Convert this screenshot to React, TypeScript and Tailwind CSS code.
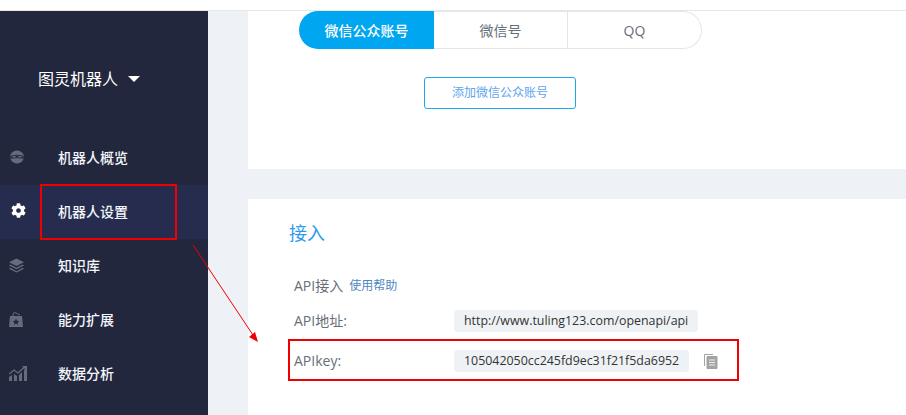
import { FaCog } from "react-icons/fa";
import type { ReactNode } from "react";

const FONT = "font-['Open_Sans','Noto_Sans_CJK_SC',sans-serif]";

function NavRow({ icon, label, active }: { icon: ReactNode; label: string; active?: boolean }) {
  return (
    <div className={`flex h-[54px] shrink-0 items-center ${active ? "bg-[#262c4e]" : ""}`}>
      <div className="flex w-[58px] shrink-0 justify-start pl-[9px]">{icon}</div>
      <span className="pb-[2px] text-[14px] font-medium text-[#f2f5fa]">{label}</span>
    </div>
  );
}

function Row({ label, children }: { label: string; children: ReactNode }) {
  return (
    <div className="flex h-[22px] items-center">
      <span className="w-[160px] shrink-0 pb-[2px] text-[14px] text-[#666e78]">{label}</span>
      {children}
    </div>
  );
}

export default function App() {
  return (
    <div className={`relative flex h-[415px] w-[906px] flex-col overflow-hidden bg-white ${FONT}`}>
      <div className="h-[11px] shrink-0 border-b border-[#e8e8e8] bg-white" />
      <div className="flex min-h-0 flex-1">
        {/* sidebar */}
        <aside className="flex w-[208px] shrink-0 flex-col bg-[#22273e]">
          <div className="flex h-[120px] shrink-0 items-center pl-[38px] pt-[15px]">
            <span className="text-[16px] text-white">图灵机器人</span>
            <span className="ml-[10px] h-0 w-0 border-x-[6px] border-t-[6px] border-x-transparent border-t-white" />
          </div>
          <NavRow
            label="机器人概览"
            icon={
              <svg className="-mt-[3px]" width="16" height="14" viewBox="0 0 16 14">
                <ellipse cx="8" cy="7" rx="7" ry="6.5" fill="#666c7e" />
                <path d="M0.5 6 Q8 3.5 15.5 6 L14.5 9 Q8 7.5 1.5 9 Z" fill="#2f3448" />
                <path d="M3.5 6.8 H6.5 M9.5 6.8 H12.5" stroke="#6f8590" />
              </svg>
            }
          />
          <NavRow
            active
            label="机器人设置"
            icon={<FaCog size={15} className="-mt-[3px] ml-[2px] text-white" />}
          />
          <NavRow
            label="知识库"
            icon={
              <svg className="-mt-[2px]" width="15" height="15" viewBox="0 0 16 15" fill="#666c7e">
                <path d="M8 0 L16 4 L8 8 L0 4 Z" />
                <path d="M1.5 6.5 L8 10 L14.5 6.5 L16 7.5 L8 11.5 L0 7.5 Z" />
                <path d="M1.5 10 L8 13.5 L14.5 10 L16 11 L8 15 L0 11 Z" />
              </svg>
            }
          />
          <NavRow
            label="能力扩展"
            icon={
              <svg className="-mt-[2px]" width="14" height="15" viewBox="0 0 14 15">
                <path d="M4 4 V2.5 Q4 0.5 6 0.5 L11 3" fill="none" stroke="#666c7e" />
                <path d="M1 4 H13 L14 15 H0 Z" fill="#666c7e" />
                <path d="M7 6.5 L8 8.8 L10.4 9 L8.6 10.5 L9.2 12.8 L7 11.6 L4.8 12.8 L5.4 10.5 L3.6 9 L6 8.8 Z" fill="#22273e" />
              </svg>
            }
          />
          <NavRow
            label="数据分析"
            icon={
              <svg className="-mt-[2px]" width="18" height="15" viewBox="0 0 18 15" fill="#666c7e">
                <path d="M0 11 L3 9 V15 H0 Z" />
                <path d="M5 8 L8 10 V15 H5 Z" />
                <path d="M10 9 L13 6 V15 H10 Z" />
                <path d="M15 4 L18 2 V15 H15 Z" />
                <path d="M0 8 L5 4 L9 7 L15 1.5" fill="none" stroke="#666c7e" strokeWidth="1.3" />
                <path d="M13 0 H18 V5 Z" />
              </svg>
            }
          />
        </aside>

        {/* content */}
        <main className="flex min-w-0 flex-1 flex-col bg-[#eef1f5] pl-[40px]">
          <section className="h-[158px] shrink-0 bg-white pl-[51px]">
            <div className="flex h-[38px] w-[403px] text-[14px]">
              <div className="flex w-[135px] shrink-0 items-center justify-center rounded-l-full bg-[#00a6f0] font-medium text-white">
                微信公众账号
              </div>
              <div className="flex w-[134px] shrink-0 items-center justify-center border-y border-r border-[#e3e5e8] text-[#666e78]">
                微信号
              </div>
              <div className="flex flex-1 items-center justify-center rounded-r-full border-y border-r border-[#e3e5e8] text-[#666e78]">
                QQ
              </div>
            </div>
            <div className="ml-[125px] mt-[28px] flex h-[32px] w-[152px] items-center justify-center rounded-[3px] border border-[#1fa8ee] text-[12px] text-[#5ea4ee]">
              添加微信公众账号
            </div>
          </section>
          <section className="mt-[30px] flex-1 bg-white pl-[41px] pt-[22px]">
            <h2 className="text-[18px] leading-[24px] text-[#2f9bec]">接入</h2>
            <div className="ml-[5px] mt-[29px] flex flex-col">
              <div className="flex h-[22px] items-center">
                <span className="text-[14px] text-[#666e78]">API接入</span>
                <span className="ml-[6px] pt-[1px] text-[12px] text-[#4f87c4]">使用帮助</span>
              </div>
              <div className="mt-[14px]">
                <Row label="API地址:">
                  <span className="flex h-[22px] items-center rounded-[3px] bg-[#eff2f5] px-[10px] text-[12.4px] text-[#333]">
                    http://www.tuling123.com/openapi/api
                  </span>
                </Row>
              </div>
              <div className="mt-[18px]">
                <Row label="APIkey:">
                  <span className="flex h-[22px] items-center rounded-[3px] bg-[#eff2f5] px-[10px] text-[12.4px] text-[#333]">
                    105042050cc245fd9ec31f21f5da6952
                  </span>
                  <svg className="ml-[15px]" width="14" height="15" viewBox="0 0 14 15">
                    <path d="M0.5 12 V0.5 H9" fill="none" stroke="#a3a3a3" />
                    <rect x="2.5" y="2" width="11" height="13" rx="1" fill="#a3a3a3" />
                    <path d="M5 6 H11 M5 8.5 H11 M5 11 H11" stroke="#eeeeee" />
                  </svg>
                </Row>
              </div>
            </div>
          </section>
        </main>
      </div>

      {/* annotations drawn over the screenshot */}
      <div className="absolute left-[40px] top-[184px] h-[56px] w-[137px] border-2 border-[#f00000]" />
      <div className="absolute left-[288px] top-[339px] h-[42px] w-[451px] border-2 border-[#f00000]" />
      <svg className="absolute left-[190px] top-[240px]" width="80" height="105" viewBox="0 0 80 105">
        <path d="M3 5 L65 98" stroke="#f00000" strokeWidth="1" fill="none" />
        <path d="M68 102 L59 97 L65 92 Z" fill="#f00000" />
      </svg>
    </div>
  );
}
